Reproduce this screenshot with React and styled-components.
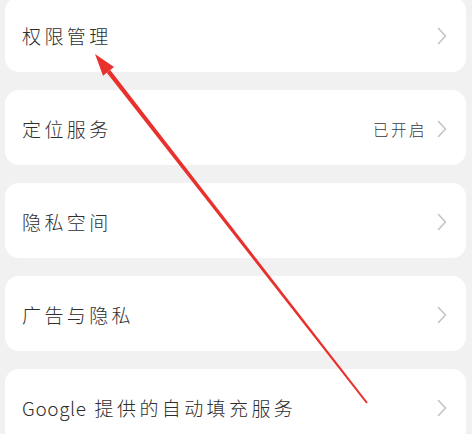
import React from "react";
import styled, { createGlobalStyle } from "styled-components";

const Global = createGlobalStyle`
  html, body { margin: 0; padding: 0; background: #f1f1f1; }
  body { font-family: "Noto Sans CJK SC", "Noto Sans", sans-serif; overflow: hidden; }
`;

const Page = styled.div`
  position: relative;
  width: 472px;
  height: 434px;
  overflow: hidden;
  background: #f1f1f1;
`;

const List = styled.div`
  display: flex;
  flex-direction: column;
  gap: 18px;
  padding: 0 6px 0 5px;
  margin-top: -3px;
`;

const Card = styled.div`
  height: 75px;
  background: #ffffff;
  border-radius: 14px;
  display: flex;
  align-items: center;
  padding: 2px 19px 0 17px;
  box-sizing: border-box;
`;

const Label = styled.span`
  flex: 1;
  font-size: 19px;
  font-weight: 300;
  letter-spacing: 3.4px;
  color: #2e2e2e;
  white-space: nowrap;
`;

const Latin = styled.span`
  letter-spacing: 0.6px;
  margin-right: 8px;
`;

const Value = styled.span`
  font-size: 15.5px;
  font-weight: 300;
  letter-spacing: 2.5px;
  color: #3a3a3a;
  margin-right: 10px;
`;

const Chevron = () => (
  <svg width="10" height="18" viewBox="0 0 10 18">
    <path d="M1.5 1.5 L8.5 9 L1.5 16.5" fill="none" stroke="#c4c4c4" strokeWidth="1.6" strokeLinecap="round" strokeLinejoin="round" />
  </svg>
);

const Overlay = styled.svg`
  position: absolute;
  left: 0;
  top: 0;
  pointer-events: none;
`;

const items = [
  { label: "权限管理" },
  { label: "定位服务", value: "已开启" },
  { label: "隐私空间" },
  { label: "广告与隐私" },
  { label: "提供的自动填充服务", latin: "Google" },
];

export default function App() {
  return (
    <>
      <Global />
      <Page>
        <List>
          {items.map((it) => (
            <Card key={it.label}>
              <Label>
                {it.latin && <Latin>{it.latin}</Latin>}
                {it.label}
              </Label>
              {it.value && <Value>{it.value}</Value>}
              <Chevron />
            </Card>
          ))}
        </List>
        <Overlay width="472" height="434" viewBox="0 0 472 434">
          <polygon
            points="367.8,402.4 366.2,403.6 106.8,72.8 110.2,70.0"
            fill="#e8302c"
          />
          <polygon points="95,54 114,67.1 103,75.7" fill="#e8302c" />
        </Overlay>
      </Page>
    </>
  );
}
